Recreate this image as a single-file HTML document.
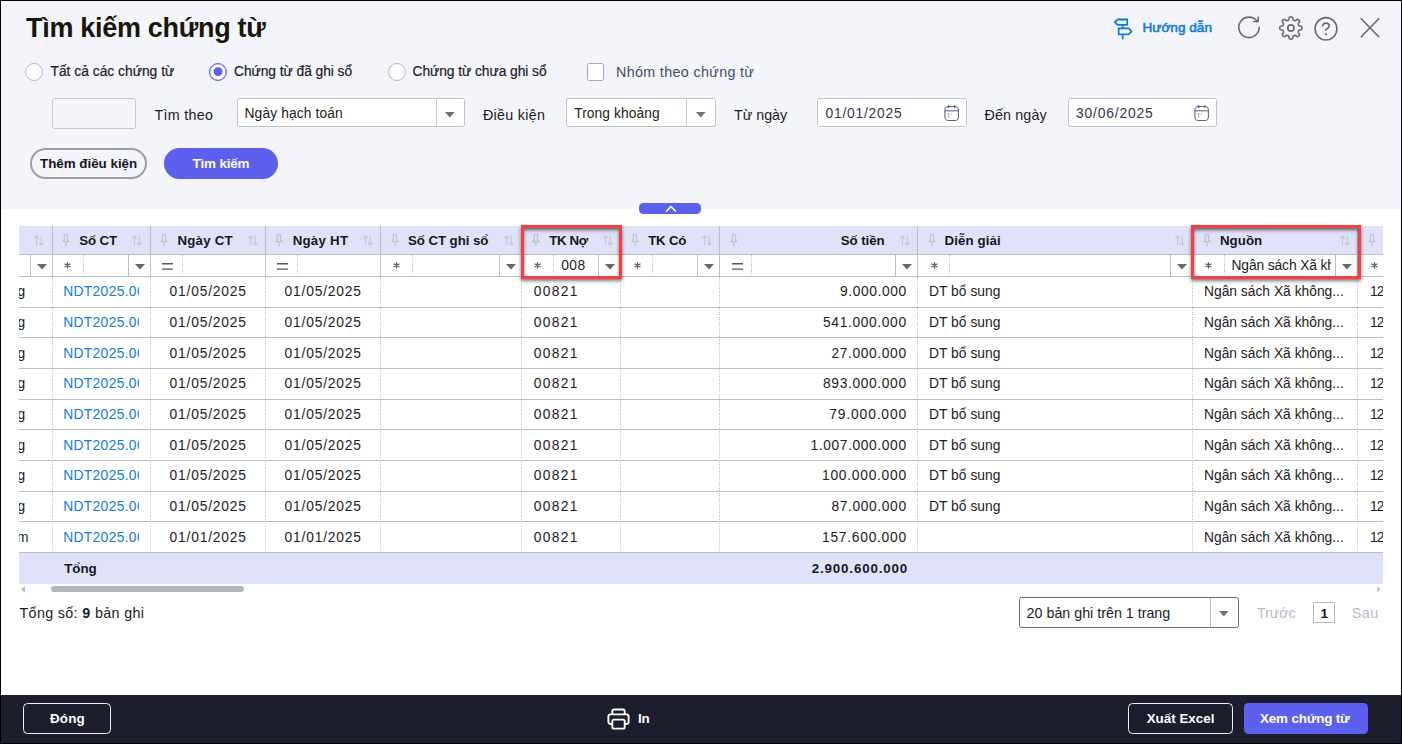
<!DOCTYPE html>
<html lang="vi">
<head>
<meta charset="utf-8">
<title>Tìm kiếm chứng từ</title>
<style>
html,body{margin:0;padding:0;}
body{width:1402px;height:744px;position:relative;overflow:hidden;background:#fff;font-family:"Liberation Sans", sans-serif;}
.abs,.t,.i,.clip,i.vs,i.vd,i.hs,.box,.red{position:absolute;display:block;}
.t{white-space:nowrap;line-height:1;font-weight:400;}
.t b{font-weight:700;}
.c0{font-size:27px;color:#17150c;font-weight:700;}
.c1{font-size:13.8px;color:#1c1c24;-webkit-text-stroke:0.2px #1c1c24;}
.c2{font-size:14.3px;color:#474c68;}
.c3{font-size:14.3px;color:#1c1c24;}
.c4{font-size:13.8px;color:#1c1c24;}
.c5{font-size:13.8px;color:#33364d;}
.c6{font-size:13.4px;color:#17171d;font-weight:700;}
.c7{font-size:13.4px;color:#ffffff;font-weight:700;}
.c8{font-size:13.6px;color:#0f7be2;-webkit-text-stroke:0.55px #0f7be2;}
.c9{font-size:13.3px;color:#17171d;font-weight:700;}
.c10{font-size:13.8px;color:#0f7be2;}
.c11{font-size:14.3px;color:#b7bac8;}
.c12{font-size:13.6px;color:#17171d;font-weight:700;}
.clip{overflow:hidden;}
.i{overflow:visible;}
i.vs{width:1px;background:#bbbdc9;}
i.hs{height:1px;background:#bbbdc9;}
i.vd{width:1px;background:repeating-linear-gradient(to bottom,#bcbfcb 0,#bcbfcb 1.1px,transparent 1.1px,transparent 2.2px);}
#frame{position:absolute;left:0;top:0;width:1400px;height:742px;border:1px solid #000;z-index:50;pointer-events:none;}
#top{position:absolute;left:1px;top:1px;width:1399px;height:207.7px;background:#f4f5fa;}
#foot{position:absolute;left:1px;top:695px;width:1400px;height:48px;background:#1d1e2d;}
.box{box-sizing:border-box;background:#fff;border:1px solid #bfc2d0;border-radius:2.5px;}
.radio{position:absolute;box-sizing:border-box;width:18px;height:18px;border-radius:50%;border:1px solid #b4b7c6;background:#fff;}
.radio.on{border-color:#5d5fef;box-shadow:inset 0 0 0 .35px #5d5fef;}
.radio.on{background:radial-gradient(circle at 8.05px 7.6px,#5d5fef 0,#5d5fef 4px,rgba(93,95,239,0) 4.8px) #fff;}
.btn{position:absolute;box-sizing:border-box;}
.red{border:3px solid #f83c40;box-shadow:0 2px 3.5px rgba(0,0,0,.52), inset 0 2.2px 3.5px rgba(0,0,0,.55);z-index:20;}
#ghead{position:absolute;left:19px;top:226px;width:1364px;height:28.4px;background:#e0e2fa;}
#gtot{position:absolute;left:19px;top:552.53px;width:1364px;height:31.2px;background:#e0e2fa;}
</style>
</head>
<body>
<div id="top"></div>

<!-- search panel -->
<section id="search">
<div class="radio" style="left:25px;top:63px"></div>
<div class="radio on" style="left:209px;top:63px"></div>
<div class="radio" style="left:388px;top:63px"></div>
<div class="box" style="left:587px;top:63px;width:17px;height:17.8px;border-color:#a3a6ba;border-radius:2.5px"></div>
<div class="box" style="left:52px;top:98px;width:84px;height:30.6px;background:#f4f5fa;border-color:#c4c6d2"></div>
<div class="box" style="left:237px;top:98px;width:228px;height:29px"><i class="vs" style="left:198px;top:0;height:27px;background:#c6c8d4"></i></div>
<svg class="i" style="left:444.8px;top:111.5px" width="9.6" height="5.4" viewBox="0 0 9.6 5.4"><path d="M0 0H9.6L4.8 5.4z" fill="#6e7078"/></svg>
<div class="box" style="left:566px;top:98px;width:150px;height:29px"><i class="vs" style="left:119px;top:0;height:27px;background:#c6c8d4"></i></div>
<svg class="i" style="left:695.8px;top:111.5px" width="9.6" height="5.4" viewBox="0 0 9.6 5.4"><path d="M0 0H9.6L4.8 5.4z" fill="#6e7078"/></svg>
<div class="box" style="left:817px;top:98px;width:150px;height:29px"></div>
<svg class="i" style="left:943.7px;top:104.6px" width="16" height="17" viewBox="0 0 16 17"><rect x="0.9" y="1.5" width="13.5" height="14" rx="3.6" fill="none" stroke="#5a6086" stroke-width="1.05"/><path d="M0.9 5.8H14.5" stroke="#5a6086" stroke-width="1.05" fill="none"/><path d="M4.6 0.7V2.3M10.6 0.7V2.3" stroke="#5a6086" stroke-width="1.4" stroke-linecap="round" fill="none"/><rect x="4.1" y="8.6" width="1.1" height="1.4" fill="#5a6086"/><rect x="6.8" y="8.6" width="1.3" height="1.2" fill="#5a6086" opacity="0.45"/><rect x="4.1" y="11.3" width="1.2" height="1.1" fill="#5a6086"/></svg>
<div class="box" style="left:1068px;top:98px;width:149px;height:29px"></div>
<svg class="i" style="left:1193.6px;top:104.6px" width="16" height="17" viewBox="0 0 16 17"><rect x="0.9" y="1.5" width="13.5" height="14" rx="3.6" fill="none" stroke="#5a6086" stroke-width="1.05"/><path d="M0.9 5.8H14.5" stroke="#5a6086" stroke-width="1.05" fill="none"/><path d="M4.6 0.7V2.3M10.6 0.7V2.3" stroke="#5a6086" stroke-width="1.4" stroke-linecap="round" fill="none"/><rect x="4.1" y="8.6" width="1.1" height="1.4" fill="#5a6086"/><rect x="6.8" y="8.6" width="1.3" height="1.2" fill="#5a6086" opacity="0.45"/><rect x="4.1" y="11.3" width="1.2" height="1.1" fill="#5a6086"/></svg>
<div class="btn" style="left:30px;top:148px;width:117px;height:30.6px;border:2px solid #9c9eab;border-radius:16px"></div>
<div class="btn" style="left:164px;top:148px;width:114px;height:31px;background:#5d5fef;border-radius:16px"></div>
<span class="t c0" style="left:26.1px;top:15px;letter-spacing:-0.31px">Tìm kiếm chứng từ</span>
<span class="t c1" style="left:50.5px;top:65px;letter-spacing:0.01px">Tất cả các chứng từ</span>
<span class="t c1" style="left:234px;top:65px;letter-spacing:-0.05px">Chứng từ đã ghi sổ</span>
<span class="t c1" style="left:412.5px;top:65px;letter-spacing:-0.05px">Chứng từ chưa ghi sổ</span>
<span class="t c2" style="left:616px;top:65px;letter-spacing:0.35px">Nhóm theo chứng từ</span>
<span class="t c3" style="left:154.5px;top:108px;letter-spacing:0.29px">Tìm theo</span>
<span class="t c4" style="left:244.5px;top:107px;letter-spacing:0.12px">Ngày hạch toán</span>
<span class="t c3" style="left:483px;top:108px;letter-spacing:0.29px">Điều kiện</span>
<span class="t c4" style="left:574.2px;top:107px;letter-spacing:0.07px">Trong khoảng</span>
<span class="t c3" style="left:734px;top:108px;letter-spacing:-0.02px">Từ ngày</span>
<span class="t c5" style="left:825.5px;top:107px;letter-spacing:0.79px">01/01/2025</span>
<span class="t c3" style="left:984.5px;top:108px;letter-spacing:0.14px">Đến ngày</span>
<span class="t c5" style="left:1075.9px;top:107px;letter-spacing:0.86px">30/06/2025</span>
<span class="t c6" style="left:40px;top:157px;letter-spacing:-0.02px">Thêm điều kiện</span>
<span class="t c7" style="left:192.5px;top:157px;letter-spacing:-0.16px">Tìm kiếm</span>
<span class="t c8" style="left:1142.5px;top:21px;letter-spacing:0.01px">Hướng dẫn</span>
</section>

<!-- toolbar icons -->
<svg class="i" style="left:1112px;top:17px" width="22" height="23" viewBox="0 0 22 23">
<path d="M5.6 2.5H15.2V7.9H5.6L2.7 5.2z M6.7 11.4H16.6L19.6 14.4L16.6 17.4H6.7z M10.7 7.9V11.4 M10.7 17.4V21.5" fill="none" stroke="#0f7be2" stroke-width="1.8" stroke-linejoin="round" stroke-linecap="round"/>
</svg>
<svg class="i" style="left:1237.2px;top:15.4px" width="25" height="25" viewBox="0 0 25 25">
<path d="M20.35 6.5A10.2 10.2 0 1 0 22.2 12.35" fill="none" stroke="#6a6a6e" stroke-width="1.6" stroke-linecap="round"/>
<path d="M21.2 2.3V6.5H16.7" fill="none" stroke="#6a6a6e" stroke-width="1.6" stroke-linecap="round" stroke-linejoin="round"/>
</svg>
<svg class="i" style="left:1279px;top:15.5px" width="24" height="24" viewBox="0 0 24 24">
<path d="M23.00 12.00L22.99 12.29L22.97 12.58L22.92 12.87L22.83 13.15L22.65 13.41L22.30 13.65L21.72 13.82L21.01 13.94L20.43 14.05L20.07 14.19L19.87 14.36L19.74 14.55L19.65 14.74L19.56 14.94L19.48 15.14L19.39 15.34L19.32 15.54L19.25 15.74L19.21 15.97L19.23 16.23L19.38 16.58L19.71 17.07L20.13 17.66L20.42 18.19L20.50 18.60L20.44 18.91L20.31 19.18L20.14 19.42L19.95 19.64L19.75 19.85L19.54 20.05L19.32 20.24L19.08 20.41L18.81 20.54L18.50 20.60L18.09 20.52L17.56 20.23L16.97 19.81L16.48 19.48L16.13 19.33L15.87 19.31L15.64 19.35L15.44 19.42L15.24 19.49L15.04 19.58L14.84 19.66L14.64 19.75L14.45 19.84L14.26 19.97L14.09 20.17L13.95 20.53L13.84 21.11L13.72 21.82L13.55 22.40L13.31 22.75L13.05 22.93L12.77 23.02L12.48 23.07L12.19 23.09L11.90 23.10L11.61 23.09L11.32 23.07L11.03 23.02L10.75 22.93L10.49 22.75L10.25 22.40L10.08 21.82L9.96 21.11L9.85 20.53L9.71 20.17L9.54 19.97L9.35 19.84L9.16 19.75L8.96 19.66L8.76 19.58L8.56 19.49L8.36 19.42L8.16 19.35L7.93 19.31L7.67 19.33L7.32 19.48L6.83 19.81L6.24 20.23L5.71 20.52L5.30 20.60L4.99 20.54L4.72 20.41L4.48 20.24L4.26 20.05L4.05 19.85L3.85 19.64L3.66 19.42L3.49 19.18L3.36 18.91L3.30 18.60L3.38 18.19L3.67 17.66L4.09 17.07L4.42 16.58L4.57 16.23L4.59 15.97L4.55 15.74L4.48 15.54L4.41 15.34L4.32 15.14L4.24 14.94L4.15 14.74L4.06 14.55L3.93 14.36L3.73 14.19L3.37 14.05L2.79 13.94L2.08 13.82L1.50 13.65L1.15 13.41L0.97 13.15L0.88 12.87L0.83 12.58L0.81 12.29L0.80 12.00L0.81 11.71L0.83 11.42L0.88 11.13L0.97 10.85L1.15 10.59L1.50 10.35L2.08 10.18L2.79 10.06L3.37 9.95L3.73 9.81L3.93 9.64L4.06 9.45L4.15 9.26L4.24 9.06L4.32 8.86L4.41 8.66L4.48 8.46L4.55 8.26L4.59 8.03L4.57 7.77L4.42 7.42L4.09 6.93L3.67 6.34L3.38 5.81L3.30 5.40L3.36 5.09L3.49 4.82L3.66 4.58L3.85 4.36L4.05 4.15L4.26 3.95L4.48 3.76L4.72 3.59L4.99 3.46L5.30 3.40L5.71 3.48L6.24 3.77L6.83 4.19L7.32 4.52L7.67 4.67L7.93 4.69L8.16 4.65L8.36 4.58L8.56 4.51L8.76 4.42L8.96 4.34L9.16 4.25L9.35 4.16L9.54 4.03L9.71 3.83L9.85 3.47L9.96 2.89L10.08 2.18L10.25 1.60L10.49 1.25L10.75 1.07L11.03 0.98L11.32 0.93L11.61 0.91L11.90 0.90L12.19 0.91L12.48 0.93L12.77 0.98L13.05 1.07L13.31 1.25L13.55 1.60L13.72 2.18L13.84 2.89L13.95 3.47L14.09 3.83L14.26 4.03L14.45 4.16L14.64 4.25L14.84 4.34L15.04 4.42L15.24 4.51L15.44 4.58L15.64 4.65L15.87 4.69L16.13 4.67L16.48 4.52L16.97 4.19L17.56 3.77L18.09 3.48L18.50 3.40L18.81 3.46L19.08 3.59L19.32 3.76L19.54 3.95L19.75 4.15L19.95 4.36L20.14 4.58L20.31 4.82L20.44 5.09L20.50 5.40L20.42 5.81L20.13 6.34L19.71 6.93L19.38 7.42L19.23 7.77L19.21 8.03L19.25 8.26L19.32 8.46L19.39 8.66L19.48 8.86L19.56 9.06L19.65 9.26L19.74 9.45L19.87 9.64L20.07 9.81L20.43 9.95L21.01 10.06L21.72 10.18L22.30 10.35L22.65 10.59L22.83 10.85L22.92 11.13L22.97 11.42L22.99 11.71z" fill="none" stroke="#6a6a6e" stroke-width="1.6" stroke-linejoin="round"/>
<circle cx="11.9" cy="12" r="3.1" fill="none" stroke="#6a6a6e" stroke-width="1.6"/>
</svg>
<svg class="i" style="left:1314px;top:16px" width="25" height="26" viewBox="0 0 25 26">
<ellipse cx="12" cy="12.85" rx="10.9" ry="11.2" fill="none" stroke="#6a6a6e" stroke-width="1.6"/>
<path d="M8.7 9.9C8.9 8.1 10.3 7.1 12 7.1C13.9 7.1 15.2 8.3 15.2 9.9C15.2 12.2 12.7 12.5 11.7 14" fill="none" stroke="#6a6a6e" stroke-width="1.6" stroke-linecap="round"/>
<rect x="11" y="17.3" width="2" height="2" rx="0.5" fill="#6a6a6e"/>
</svg>
<svg class="i" style="left:1360px;top:18px" width="20" height="20" viewBox="0 0 20 20">
<path d="M0.8 0.3L19.2 19.3M19.2 0.3L0.8 19.3" fill="none" stroke="#6a6a6e" stroke-width="1.6"/>
</svg>

<!-- collapse handle -->
<div class="abs" style="left:639px;top:203px;width:62px;height:11px;border-radius:4.6px;background:#5d5fef"></div>
<svg class="i" style="left:665px;top:205px" width="12" height="8" viewBox="0 0 12 8"><path d="M1 6.6L6 1.6L11 6.6" fill="none" stroke="#fff" stroke-width="1.5"/></svg>

<!-- grid -->
<section id="grid">
<div id="ghead"></div>
<div id="gtot"></div>
<i class="vs" style="left:52px;top:226px;height:50.5px"></i><i class="vd" style="left:52px;top:276.5px;height:276.03px"></i><i class="vs" style="left:150px;top:226px;height:50.5px"></i><i class="vd" style="left:150px;top:276.5px;height:276.03px"></i><i class="vs" style="left:265px;top:226px;height:50.5px"></i><i class="vd" style="left:265px;top:276.5px;height:276.03px"></i><i class="vs" style="left:380px;top:226px;height:50.5px"></i><i class="vd" style="left:380px;top:276.5px;height:276.03px"></i><i class="vs" style="left:521px;top:226px;height:50.5px"></i><i class="vd" style="left:521px;top:276.5px;height:276.03px"></i><i class="vs" style="left:620px;top:226px;height:50.5px"></i><i class="vd" style="left:620px;top:276.5px;height:276.03px"></i><i class="vs" style="left:719px;top:226px;height:50.5px"></i><i class="vd" style="left:719px;top:276.5px;height:276.03px"></i><i class="vs" style="left:917px;top:226px;height:50.5px"></i><i class="vd" style="left:917px;top:276.5px;height:276.03px"></i><i class="vs" style="left:1192px;top:226px;height:50.5px"></i><i class="vd" style="left:1192px;top:276.5px;height:276.03px"></i><i class="vs" style="left:1357px;top:226px;height:50.5px"></i><i class="vd" style="left:1357px;top:276.5px;height:276.03px"></i><i class="hs" style="left:19px;top:253.9px;width:1364px"></i><i class="hs" style="left:19px;top:276px;width:1364px"></i><i class="hs" style="left:19px;top:306.67px;width:1364px"></i><i class="hs" style="left:19px;top:337.34px;width:1364px"></i><i class="hs" style="left:19px;top:368.01px;width:1364px"></i><i class="hs" style="left:19px;top:398.68px;width:1364px"></i><i class="hs" style="left:19px;top:429.35px;width:1364px"></i><i class="hs" style="left:19px;top:460.02px;width:1364px"></i><i class="hs" style="left:19px;top:490.69px;width:1364px"></i><i class="hs" style="left:19px;top:521.36px;width:1364px"></i><i class="hs" style="left:19px;top:552.03px;width:1364px"></i>
<svg class="i" style="left:62px;top:234px" width="8" height="13" viewBox="0 0 8 13"><path d="M2.3 0.7h3.2v5.3l1.6 1.6H0.7l1.6-1.6z M3.9 7.6v4.5" fill="none" stroke="#c2c4d4" stroke-width="1.25" stroke-linejoin="round" stroke-linecap="round"/></svg><svg class="i" style="left:160px;top:234px" width="8" height="13" viewBox="0 0 8 13"><path d="M2.3 0.7h3.2v5.3l1.6 1.6H0.7l1.6-1.6z M3.9 7.6v4.5" fill="none" stroke="#c2c4d4" stroke-width="1.25" stroke-linejoin="round" stroke-linecap="round"/></svg><svg class="i" style="left:275px;top:234px" width="8" height="13" viewBox="0 0 8 13"><path d="M2.3 0.7h3.2v5.3l1.6 1.6H0.7l1.6-1.6z M3.9 7.6v4.5" fill="none" stroke="#c2c4d4" stroke-width="1.25" stroke-linejoin="round" stroke-linecap="round"/></svg><svg class="i" style="left:390.75px;top:234px" width="8" height="13" viewBox="0 0 8 13"><path d="M2.3 0.7h3.2v5.3l1.6 1.6H0.7l1.6-1.6z M3.9 7.6v4.5" fill="none" stroke="#c2c4d4" stroke-width="1.25" stroke-linejoin="round" stroke-linecap="round"/></svg><svg class="i" style="left:531.5px;top:234px" width="8" height="13" viewBox="0 0 8 13"><path d="M2.3 0.7h3.2v5.3l1.6 1.6H0.7l1.6-1.6z M3.9 7.6v4.5" fill="none" stroke="#c2c4d4" stroke-width="1.25" stroke-linejoin="round" stroke-linecap="round"/></svg><svg class="i" style="left:631.25px;top:234px" width="8" height="13" viewBox="0 0 8 13"><path d="M2.3 0.7h3.2v5.3l1.6 1.6H0.7l1.6-1.6z M3.9 7.6v4.5" fill="none" stroke="#c2c4d4" stroke-width="1.25" stroke-linejoin="round" stroke-linecap="round"/></svg><svg class="i" style="left:730px;top:234px" width="8" height="13" viewBox="0 0 8 13"><path d="M2.3 0.7h3.2v5.3l1.6 1.6H0.7l1.6-1.6z M3.9 7.6v4.5" fill="none" stroke="#c2c4d4" stroke-width="1.25" stroke-linejoin="round" stroke-linecap="round"/></svg><svg class="i" style="left:928.25px;top:234px" width="8" height="13" viewBox="0 0 8 13"><path d="M2.3 0.7h3.2v5.3l1.6 1.6H0.7l1.6-1.6z M3.9 7.6v4.5" fill="none" stroke="#c2c4d4" stroke-width="1.25" stroke-linejoin="round" stroke-linecap="round"/></svg><svg class="i" style="left:1203px;top:234px" width="8" height="13" viewBox="0 0 8 13"><path d="M2.3 0.7h3.2v5.3l1.6 1.6H0.7l1.6-1.6z M3.9 7.6v4.5" fill="none" stroke="#c2c4d4" stroke-width="1.25" stroke-linejoin="round" stroke-linecap="round"/></svg><svg class="i" style="left:1368.2px;top:234px" width="8" height="13" viewBox="0 0 8 13"><path d="M2.3 0.7h3.2v5.3l1.6 1.6H0.7l1.6-1.6z M3.9 7.6v4.5" fill="none" stroke="#c2c4d4" stroke-width="1.25" stroke-linejoin="round" stroke-linecap="round"/></svg><svg class="i" style="left:34.2px;top:235.1px" width="10" height="11" viewBox="0 0 10 11"><path d="M2.6 10.2V0.9M0.6 3L2.6 0.9L4.6 3M7.3 0.6V10M5.3 7.9L7.3 10L9.3 7.9" fill="none" stroke="#c6c8d7" stroke-width="1.15" stroke-linecap="round" stroke-linejoin="round"/></svg><svg class="i" style="left:131.8px;top:235.1px" width="10" height="11" viewBox="0 0 10 11"><path d="M2.6 10.2V0.9M0.6 3L2.6 0.9L4.6 3M7.3 0.6V10M5.3 7.9L7.3 10L9.3 7.9" fill="none" stroke="#c6c8d7" stroke-width="1.15" stroke-linecap="round" stroke-linejoin="round"/></svg><svg class="i" style="left:247.8px;top:235.1px" width="10" height="11" viewBox="0 0 10 11"><path d="M2.6 10.2V0.9M0.6 3L2.6 0.9L4.6 3M7.3 0.6V10M5.3 7.9L7.3 10L9.3 7.9" fill="none" stroke="#c6c8d7" stroke-width="1.15" stroke-linecap="round" stroke-linejoin="round"/></svg><svg class="i" style="left:363px;top:235.1px" width="10" height="11" viewBox="0 0 10 11"><path d="M2.6 10.2V0.9M0.6 3L2.6 0.9L4.6 3M7.3 0.6V10M5.3 7.9L7.3 10L9.3 7.9" fill="none" stroke="#c6c8d7" stroke-width="1.15" stroke-linecap="round" stroke-linejoin="round"/></svg><svg class="i" style="left:503.7px;top:235.1px" width="10" height="11" viewBox="0 0 10 11"><path d="M2.6 10.2V0.9M0.6 3L2.6 0.9L4.6 3M7.3 0.6V10M5.3 7.9L7.3 10L9.3 7.9" fill="none" stroke="#c6c8d7" stroke-width="1.15" stroke-linecap="round" stroke-linejoin="round"/></svg><svg class="i" style="left:602.9px;top:235.1px" width="10" height="11" viewBox="0 0 10 11"><path d="M2.6 10.2V0.9M0.6 3L2.6 0.9L4.6 3M7.3 0.6V10M5.3 7.9L7.3 10L9.3 7.9" fill="none" stroke="#c6c8d7" stroke-width="1.15" stroke-linecap="round" stroke-linejoin="round"/></svg><svg class="i" style="left:702px;top:235.1px" width="10" height="11" viewBox="0 0 10 11"><path d="M2.6 10.2V0.9M0.6 3L2.6 0.9L4.6 3M7.3 0.6V10M5.3 7.9L7.3 10L9.3 7.9" fill="none" stroke="#c6c8d7" stroke-width="1.15" stroke-linecap="round" stroke-linejoin="round"/></svg><svg class="i" style="left:899.7px;top:235.1px" width="10" height="11" viewBox="0 0 10 11"><path d="M2.6 10.2V0.9M0.6 3L2.6 0.9L4.6 3M7.3 0.6V10M5.3 7.9L7.3 10L9.3 7.9" fill="none" stroke="#c6c8d7" stroke-width="1.15" stroke-linecap="round" stroke-linejoin="round"/></svg><svg class="i" style="left:1175px;top:235.1px" width="10" height="11" viewBox="0 0 10 11"><path d="M2.6 10.2V0.9M0.6 3L2.6 0.9L4.6 3M7.3 0.6V10M5.3 7.9L7.3 10L9.3 7.9" fill="none" stroke="#c6c8d7" stroke-width="1.15" stroke-linecap="round" stroke-linejoin="round"/></svg><svg class="i" style="left:1339.6px;top:235.1px" width="10" height="11" viewBox="0 0 10 11"><path d="M2.6 10.2V0.9M0.6 3L2.6 0.9L4.6 3M7.3 0.6V10M5.3 7.9L7.3 10L9.3 7.9" fill="none" stroke="#c6c8d7" stroke-width="1.15" stroke-linecap="round" stroke-linejoin="round"/></svg>
<span class="t c9" style="left:79.3px;top:234px;letter-spacing:-0.15px">Số CT</span>
<span class="t c9" style="left:177.5px;top:234px;letter-spacing:0.2px">Ngày CT</span>
<span class="t c9" style="left:292.65px;top:234px;letter-spacing:0.24px">Ngày HT</span>
<span class="t c9" style="left:408px;top:234px;letter-spacing:-0.08px">Số CT ghi sổ</span>
<span class="t c9" style="left:549.25px;top:234px;letter-spacing:-0.38px">TK Nợ</span>
<span class="t c9" style="left:648.25px;top:234px;letter-spacing:-0.26px">TK Có</span>
<span class="t c9" style="left:840.75px;top:234px;letter-spacing:-0.08px">Số tiền</span>
<span class="t c9" style="left:944.5px;top:234px;letter-spacing:0.1px">Diễn giải</span>
<span class="t c9" style="left:1220px;top:234px;letter-spacing:0.01px">Nguồn</span>
<svg class="i" style="left:64.4px;top:262.2px" width="7" height="7" viewBox="0 0 7 7"><path d="M3.5 0.2V6.6M0.5 1.8L6.5 5M6.5 1.8L0.5 5" fill="none" stroke="#55575f" stroke-width="1.3"/></svg><svg class="i" style="left:162px;top:262.7px" width="12" height="8" viewBox="0 0 12 8"><path d="M0 0.75H11M0 6.2H11" fill="none" stroke="#55575f" stroke-width="1.3"/></svg><svg class="i" style="left:277px;top:262.7px" width="12" height="8" viewBox="0 0 12 8"><path d="M0 0.75H11M0 6.2H11" fill="none" stroke="#55575f" stroke-width="1.3"/></svg><svg class="i" style="left:393.35px;top:262.2px" width="7" height="7" viewBox="0 0 7 7"><path d="M3.5 0.2V6.6M0.5 1.8L6.5 5M6.5 1.8L0.5 5" fill="none" stroke="#55575f" stroke-width="1.3"/></svg><svg class="i" style="left:533.85px;top:262.2px" width="7" height="7" viewBox="0 0 7 7"><path d="M3.5 0.2V6.6M0.5 1.8L6.5 5M6.5 1.8L0.5 5" fill="none" stroke="#55575f" stroke-width="1.3"/></svg><svg class="i" style="left:633.85px;top:262.2px" width="7" height="7" viewBox="0 0 7 7"><path d="M3.5 0.2V6.6M0.5 1.8L6.5 5M6.5 1.8L0.5 5" fill="none" stroke="#55575f" stroke-width="1.3"/></svg><svg class="i" style="left:731.75px;top:262.7px" width="12" height="8" viewBox="0 0 12 8"><path d="M0 0.75H11M0 6.2H11" fill="none" stroke="#55575f" stroke-width="1.3"/></svg><svg class="i" style="left:930.6px;top:262.2px" width="7" height="7" viewBox="0 0 7 7"><path d="M3.5 0.2V6.6M0.5 1.8L6.5 5M6.5 1.8L0.5 5" fill="none" stroke="#55575f" stroke-width="1.3"/></svg><svg class="i" style="left:1205.3px;top:262.2px" width="7" height="7" viewBox="0 0 7 7"><path d="M3.5 0.2V6.6M0.5 1.8L6.5 5M6.5 1.8L0.5 5" fill="none" stroke="#55575f" stroke-width="1.3"/></svg><svg class="i" style="left:1370.9px;top:262.2px" width="7" height="7" viewBox="0 0 7 7"><path d="M3.5 0.2V6.6M0.5 1.8L6.5 5M6.5 1.8L0.5 5" fill="none" stroke="#55575f" stroke-width="1.3"/></svg><i class="vd" style="left:83px;top:255.4px;height:20.1px"></i><i class="vd" style="left:182px;top:255.4px;height:20.1px"></i><i class="vd" style="left:297px;top:255.4px;height:20.1px"></i><i class="vd" style="left:412px;top:255.4px;height:20.1px"></i><i class="vd" style="left:553px;top:255.4px;height:20.1px"></i><i class="vd" style="left:652px;top:255.4px;height:20.1px"></i><i class="vd" style="left:750.75px;top:255.4px;height:20.1px"></i><i class="vd" style="left:949px;top:255.4px;height:20.1px"></i><i class="vd" style="left:1224px;top:255.4px;height:20.1px"></i><i class="vs" style="left:30px;top:254.4px;height:22.1px"></i><i class="vs" style="left:128px;top:254.4px;height:22.1px"></i><i class="vs" style="left:499px;top:254.4px;height:22.1px"></i><i class="vs" style="left:597.75px;top:254.4px;height:22.1px"></i><i class="vs" style="left:697.1px;top:254.4px;height:22.1px"></i><i class="vs" style="left:895px;top:254.4px;height:22.1px"></i><i class="vs" style="left:1170px;top:254.4px;height:22.1px"></i><i class="vs" style="left:1334.5px;top:254.4px;height:22.1px"></i><svg class="i" style="left:37.4px;top:264.3px" width="10" height="5.4" viewBox="0 0 10 5.4"><path d="M0 0H10L5 5.4z" fill="#666870"/></svg><svg class="i" style="left:134.9px;top:264.3px" width="10" height="5.4" viewBox="0 0 10 5.4"><path d="M0 0H10L5 5.4z" fill="#666870"/></svg><svg class="i" style="left:506px;top:264.3px" width="10" height="5.4" viewBox="0 0 10 5.4"><path d="M0 0H10L5 5.4z" fill="#666870"/></svg><svg class="i" style="left:604.8px;top:264.3px" width="10" height="5.4" viewBox="0 0 10 5.4"><path d="M0 0H10L5 5.4z" fill="#666870"/></svg><svg class="i" style="left:704.4px;top:264.3px" width="10" height="5.4" viewBox="0 0 10 5.4"><path d="M0 0H10L5 5.4z" fill="#666870"/></svg><svg class="i" style="left:901.9px;top:264.3px" width="10" height="5.4" viewBox="0 0 10 5.4"><path d="M0 0H10L5 5.4z" fill="#666870"/></svg><svg class="i" style="left:1177.4px;top:264.3px" width="10" height="5.4" viewBox="0 0 10 5.4"><path d="M0 0H10L5 5.4z" fill="#666870"/></svg><svg class="i" style="left:1341.8px;top:264.3px" width="10" height="5.4" viewBox="0 0 10 5.4"><path d="M0 0H10L5 5.4z" fill="#666870"/></svg>
<span class="t c4" style="left:561.25px;top:259px;letter-spacing:0.45px">008</span>
<div class="clip" style="left:1226px;top:256px;width:105.3px;height:21.8px"><span class="t c4" style="left:5.5px;top:3px;letter-spacing:-0.11px">Ngân sách Xã kh</span></div>
<div class="row">
<div class="clip" style="left:19px;top:282px;width:33px;height:21.8px"><span class="t c4" style="left:-123.7px;top:3px;letter-spacing:-0.4px">Nhận dự toán bổ sung</span></div>
<div class="clip" style="left:56px;top:282px;width:82.8px;height:21.8px"><span class="t c10" style="left:7.2px;top:3px;letter-spacing:0.35px">NDT2025.00</span></div>
<span class="t c4" style="left:169.5px;top:285px;letter-spacing:0.82px">01/05/2025</span>
<span class="t c4" style="left:284.5px;top:285px;letter-spacing:0.82px">01/05/2025</span>
<span class="t c4" style="left:533.75px;top:285px;letter-spacing:1.34px">00821</span>
<span class="t c4" style="left:840px;top:285px;letter-spacing:0.59px">9.000.000</span>
<span class="t c4" style="left:929px;top:285px;letter-spacing:0.04px">DT bổ sung</span>
<span class="t c4" style="left:1204px;top:285px;letter-spacing:0.01px">Ngân sách Xã không...</span>
<div class="clip" style="left:1360px;top:282px;width:23px;height:21.8px"><span class="t c4" style="left:9.9px;top:3px;letter-spacing:-0.87px">12</span></div>
</div>
<div class="row">
<div class="clip" style="left:19px;top:313px;width:33px;height:21.8px"><span class="t c4" style="left:-123.7px;top:3px;letter-spacing:-0.4px">Nhận dự toán bổ sung</span></div>
<div class="clip" style="left:56px;top:313px;width:82.8px;height:21.8px"><span class="t c10" style="left:7.2px;top:3px;letter-spacing:0.35px">NDT2025.00</span></div>
<span class="t c4" style="left:169.5px;top:316px;letter-spacing:0.82px">01/05/2025</span>
<span class="t c4" style="left:284.5px;top:316px;letter-spacing:0.82px">01/05/2025</span>
<span class="t c4" style="left:533.75px;top:316px;letter-spacing:1.34px">00821</span>
<span class="t c4" style="left:823.05px;top:316px;letter-spacing:0.63px">541.000.000</span>
<span class="t c4" style="left:929px;top:316px;letter-spacing:0.04px">DT bổ sung</span>
<span class="t c4" style="left:1204px;top:316px;letter-spacing:0.01px">Ngân sách Xã không...</span>
<div class="clip" style="left:1360px;top:313px;width:23px;height:21.8px"><span class="t c4" style="left:9.9px;top:3px;letter-spacing:-0.87px">12</span></div>
</div>
<div class="row">
<div class="clip" style="left:19px;top:344px;width:33px;height:21.8px"><span class="t c4" style="left:-123.7px;top:3px;letter-spacing:-0.4px">Nhận dự toán bổ sung</span></div>
<div class="clip" style="left:56px;top:344px;width:82.8px;height:21.8px"><span class="t c10" style="left:7.2px;top:3px;letter-spacing:0.35px">NDT2025.00</span></div>
<span class="t c4" style="left:169.5px;top:347px;letter-spacing:0.82px">01/05/2025</span>
<span class="t c4" style="left:284.5px;top:347px;letter-spacing:0.82px">01/05/2025</span>
<span class="t c4" style="left:533.75px;top:347px;letter-spacing:1.34px">00821</span>
<span class="t c4" style="left:831.45px;top:347px;letter-spacing:0.62px">27.000.000</span>
<span class="t c4" style="left:929px;top:347px;letter-spacing:0.04px">DT bổ sung</span>
<span class="t c4" style="left:1204px;top:347px;letter-spacing:0.01px">Ngân sách Xã không...</span>
<div class="clip" style="left:1360px;top:344px;width:23px;height:21.8px"><span class="t c4" style="left:9.9px;top:3px;letter-spacing:-0.87px">12</span></div>
</div>
<div class="row">
<div class="clip" style="left:19px;top:374px;width:33px;height:21.8px"><span class="t c4" style="left:-123.7px;top:3px;letter-spacing:-0.4px">Nhận dự toán bổ sung</span></div>
<div class="clip" style="left:56px;top:374px;width:82.8px;height:21.8px"><span class="t c10" style="left:7.2px;top:3px;letter-spacing:0.35px">NDT2025.00</span></div>
<span class="t c4" style="left:169.5px;top:377px;letter-spacing:0.82px">01/05/2025</span>
<span class="t c4" style="left:284.5px;top:377px;letter-spacing:0.82px">01/05/2025</span>
<span class="t c4" style="left:533.75px;top:377px;letter-spacing:1.34px">00821</span>
<span class="t c4" style="left:823.05px;top:377px;letter-spacing:0.63px">893.000.000</span>
<span class="t c4" style="left:929px;top:377px;letter-spacing:0.04px">DT bổ sung</span>
<span class="t c4" style="left:1204px;top:377px;letter-spacing:0.01px">Ngân sách Xã không...</span>
<div class="clip" style="left:1360px;top:374px;width:23px;height:21.8px"><span class="t c4" style="left:9.9px;top:3px;letter-spacing:-0.87px">12</span></div>
</div>
<div class="row">
<div class="clip" style="left:19px;top:405px;width:33px;height:21.8px"><span class="t c4" style="left:-123.7px;top:3px;letter-spacing:-0.4px">Nhận dự toán bổ sung</span></div>
<div class="clip" style="left:56px;top:405px;width:82.8px;height:21.8px"><span class="t c10" style="left:7.2px;top:3px;letter-spacing:0.35px">NDT2025.00</span></div>
<span class="t c4" style="left:169.5px;top:408px;letter-spacing:0.82px">01/05/2025</span>
<span class="t c4" style="left:284.5px;top:408px;letter-spacing:0.82px">01/05/2025</span>
<span class="t c4" style="left:533.75px;top:408px;letter-spacing:1.34px">00821</span>
<span class="t c4" style="left:829.25px;top:408px;letter-spacing:0.87px">79.000.000</span>
<span class="t c4" style="left:929px;top:408px;letter-spacing:0.04px">DT bổ sung</span>
<span class="t c4" style="left:1204px;top:408px;letter-spacing:0.01px">Ngân sách Xã không...</span>
<div class="clip" style="left:1360px;top:405px;width:23px;height:21.8px"><span class="t c4" style="left:9.9px;top:3px;letter-spacing:-0.87px">12</span></div>
</div>
<div class="row">
<div class="clip" style="left:19px;top:436px;width:33px;height:21.8px"><span class="t c4" style="left:-123.7px;top:3px;letter-spacing:-0.4px">Nhận dự toán bổ sung</span></div>
<div class="clip" style="left:56px;top:436px;width:82.8px;height:21.8px"><span class="t c10" style="left:7.2px;top:3px;letter-spacing:0.35px">NDT2025.00</span></div>
<span class="t c4" style="left:169.5px;top:439px;letter-spacing:0.82px">01/05/2025</span>
<span class="t c4" style="left:284.5px;top:439px;letter-spacing:0.82px">01/05/2025</span>
<span class="t c4" style="left:533.75px;top:439px;letter-spacing:1.34px">00821</span>
<span class="t c4" style="left:810.4px;top:439px;letter-spacing:0.62px">1.007.000.000</span>
<span class="t c4" style="left:929px;top:439px;letter-spacing:0.04px">DT bổ sung</span>
<span class="t c4" style="left:1204px;top:439px;letter-spacing:0.01px">Ngân sách Xã không...</span>
<div class="clip" style="left:1360px;top:436px;width:23px;height:21.8px"><span class="t c4" style="left:9.9px;top:3px;letter-spacing:-0.87px">12</span></div>
</div>
<div class="row">
<div class="clip" style="left:19px;top:466px;width:33px;height:21.8px"><span class="t c4" style="left:-123.7px;top:3px;letter-spacing:-0.4px">Nhận dự toán bổ sung</span></div>
<div class="clip" style="left:56px;top:466px;width:82.8px;height:21.8px"><span class="t c10" style="left:7.2px;top:3px;letter-spacing:0.35px">NDT2025.00</span></div>
<span class="t c4" style="left:169.5px;top:469px;letter-spacing:0.82px">01/05/2025</span>
<span class="t c4" style="left:284.5px;top:469px;letter-spacing:0.82px">01/05/2025</span>
<span class="t c4" style="left:533.75px;top:469px;letter-spacing:1.34px">00821</span>
<span class="t c4" style="left:822.05px;top:469px;letter-spacing:0.73px">100.000.000</span>
<span class="t c4" style="left:929px;top:469px;letter-spacing:0.04px">DT bổ sung</span>
<span class="t c4" style="left:1204px;top:469px;letter-spacing:0.01px">Ngân sách Xã không...</span>
<div class="clip" style="left:1360px;top:466px;width:23px;height:21.8px"><span class="t c4" style="left:9.9px;top:3px;letter-spacing:-0.87px">12</span></div>
</div>
<div class="row">
<div class="clip" style="left:19px;top:497px;width:33px;height:21.8px"><span class="t c4" style="left:-123.7px;top:3px;letter-spacing:-0.4px">Nhận dự toán bổ sung</span></div>
<div class="clip" style="left:56px;top:497px;width:82.8px;height:21.8px"><span class="t c10" style="left:7.2px;top:3px;letter-spacing:0.35px">NDT2025.00</span></div>
<span class="t c4" style="left:169.5px;top:500px;letter-spacing:0.82px">01/05/2025</span>
<span class="t c4" style="left:284.5px;top:500px;letter-spacing:0.82px">01/05/2025</span>
<span class="t c4" style="left:533.75px;top:500px;letter-spacing:1.34px">00821</span>
<span class="t c4" style="left:831.45px;top:500px;letter-spacing:0.62px">87.000.000</span>
<span class="t c4" style="left:929px;top:500px;letter-spacing:0.04px">DT bổ sung</span>
<span class="t c4" style="left:1204px;top:500px;letter-spacing:0.01px">Ngân sách Xã không...</span>
<div class="clip" style="left:1360px;top:497px;width:23px;height:21.8px"><span class="t c4" style="left:9.9px;top:3px;letter-spacing:-0.87px">12</span></div>
</div>
<div class="row">
<div class="clip" style="left:19px;top:528px;width:33px;height:21.8px"><span class="t c4" style="left:-127px;top:3px;letter-spacing:-0.29px">Nhận dự toán đầu năm</span></div>
<div class="clip" style="left:56px;top:528px;width:82.8px;height:21.8px"><span class="t c10" style="left:7.2px;top:3px;letter-spacing:0.35px">NDT2025.00</span></div>
<span class="t c4" style="left:169.5px;top:531px;letter-spacing:0.82px">01/01/2025</span>
<span class="t c4" style="left:284.5px;top:531px;letter-spacing:0.82px">01/01/2025</span>
<span class="t c4" style="left:533.75px;top:531px;letter-spacing:1.34px">00821</span>
<span class="t c4" style="left:822.05px;top:531px;letter-spacing:0.73px">157.600.000</span>
<span class="t c4" style="left:1204px;top:531px;letter-spacing:0.01px">Ngân sách Xã không...</span>
<div class="clip" style="left:1360px;top:528px;width:23px;height:21.8px"><span class="t c4" style="left:9.9px;top:3px;letter-spacing:-0.87px">12</span></div>
</div>
<span class="t c6" style="left:64.25px;top:562px;letter-spacing:-0.11px">Tổng</span>
<span class="t c6" style="left:811.7px;top:562px;letter-spacing:0.83px">2.900.600.000</span>
<div class="red" style="left:521px;top:225px;width:95px;height:48px"></div>
<div class="red" style="left:1191px;top:225px;width:164.2px;height:48px"></div>
<!-- scrollbar -->
<div class="abs" style="left:51px;top:586.2px;width:193px;height:5.8px;border-radius:3px;background:#b3b6be"></div>
<svg class="i" style="left:21.4px;top:586px" width="4" height="7" viewBox="0 0 4 7"><path d="M3.8 0.2V6.4L0.2 3.3z" fill="#b3b5bd"/></svg>
<svg class="i" style="left:1377.2px;top:585.6px" width="4" height="7" viewBox="0 0 4 7"><path d="M0.2 0.2V6.4L3.8 3.3z" fill="#c2c4cc"/></svg>
</section>

<!-- pager -->
<section id="pager">
<div class="box" style="left:1019px;top:597.4px;width:220px;height:30.2px;border-color:#6a6b72;border-radius:2.5px"><i class="vs" style="left:190px;top:0;height:28.2px;background:#b9bbc6"></i></div>
<svg class="i" style="left:1219.2px;top:610.6px" width="9.6" height="5.4" viewBox="0 0 9.6 5.4"><path d="M0 0H9.6L4.8 5.4z" fill="#6e7078"/></svg>
<div class="box" style="left:1313px;top:602px;width:22px;height:20.6px;border-color:#b4b7c4;border-radius:0"></div>
<span class="t c3" style="left:19.5px;top:606px;letter-spacing:0.35px">Tổng số: <b>9</b> bản ghi</span>
<span class="t c3" style="left:1026.6px;top:606px;letter-spacing:-0.01px">20 bản ghi trên 1 trang</span>
<span class="t c11" style="left:1257.1px;top:606px;letter-spacing:-0.13px">Trước</span>
<span class="t c12" style="left:1320.4px;top:607px;">1</span>
<span class="t c11" style="left:1351.7px;top:606px;letter-spacing:0.51px">Sau</span>
</section>

<!-- footer -->
<div id="foot"></div>
<section id="actions">
<div class="btn" style="left:23px;top:703px;width:88px;height:31px;border:1px solid #f0f0f4;border-radius:4.5px"></div>
<svg class="i" style="left:607px;top:708px" width="23" height="22" viewBox="0 0 23 22">
<path d="M5.3 6.2V3.2C5.3 2.1 6 1.5 7 1.5H16C17 1.5 17.7 2.1 17.7 3.2V6.2" fill="none" stroke="#fff" stroke-width="1.9"/>
<path d="M5.3 16H3.6C2.3 16 1.4 15.1 1.4 13.8V8.6C1.4 7.3 2.3 6.4 3.6 6.4H19.4C20.7 6.4 21.6 7.3 21.6 8.6V13.8C21.6 15.1 20.7 16 19.4 16H17.7" fill="none" stroke="#fff" stroke-width="1.9"/>
<rect x="5.3" y="11.6" width="12.4" height="9" rx="1.6" fill="none" stroke="#fff" stroke-width="1.9"/>
</svg>
<div class="btn" style="left:1128px;top:703px;width:105px;height:31px;border:1px solid #f0f0f4;border-radius:4.5px"></div>
<div class="btn" style="left:1244px;top:703px;width:124px;height:31px;background:#5d5fef;border-radius:4.5px"></div>
<span class="t c7" style="left:50px;top:712px;letter-spacing:0.16px">Đóng</span>
<span class="t c7" style="left:638px;top:712px;letter-spacing:-0.32px">In</span>
<span class="t c7" style="left:1146.7px;top:712px;">Xuất Excel</span>
<span class="t c7" style="left:1260.1px;top:712px;letter-spacing:-0.18px">Xem chứng từ</span>
</section>

<div id="frame"></div>
</body>
</html>
